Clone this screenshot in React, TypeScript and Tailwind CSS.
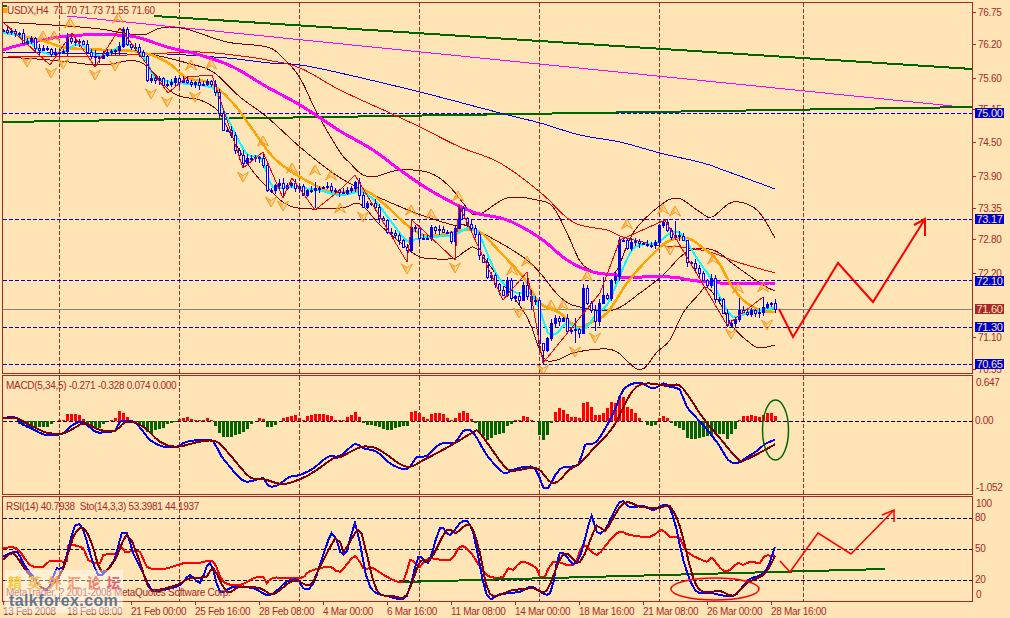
import React from 'react';

type Pt = [number, number];

// reference was measured in 3x crops, so most series are written as crop coords
const crop = (x0: number, y0: number, a: number[]): Pt[] => {
  const out: Pt[] = [];
  for (let i = 0; i < a.length; i += 2) out.push([x0 + a[i] / 3, y0 + a[i + 1] / 3]);
  return out;
};

// catmull-rom through the measured points, one sample per bar (bars are 4px apart)
const smooth = (p: Pt[]): Pt[] => {
  const out: Pt[] = [];
  for (let i = 0; i < p.length - 1; i++) {
    const a = p[Math.max(i - 1, 0)];
    const b = p[i];
    const c = p[i + 1];
    const d = p[Math.min(i + 2, p.length - 1)];
    const steps = Math.max(1, Math.round((c[0] - b[0]) / 4));
    for (let s = 0; s < steps; s++) {
      const t = s / steps;
      const f = (k: 0 | 1) =>
        0.5 * (2 * b[k] + (c[k] - a[k]) * t + (2 * a[k] - 5 * b[k] + 4 * c[k] - d[k]) * t * t + (3 * b[k] - a[k] - 3 * c[k] + d[k]) * t * t * t);
      out.push([f(0), f(1)]);
    }
  }
  out.push(p[p.length - 1]);
  return out;
};

const pts = (p: Pt[]) => p.map(([x, y]) => `${x.toFixed(1)},${y.toFixed(1)}`).join(' ');
const curve = (p: Pt[]) => pts(smooth(p));

const closes: Pt[] = [
  [3,30],[7,32],[11,31],[15,33],[19,33],[23,43],[27,41],[31,38],[35,48],[39,50],[43,48],[47,49],[51,54],[55,52],[59,52],[63,51],[67,38],[71,41],[75,42],[79,41],[83,44],[87,52],[91,56],[95,57],[99,58],[103,55],[107,52],[111,51],[115,50],[119,46],[123,29],[127,44],[131,47],[135,47],[139,52],[143,56],[147,80],[151,78],[155,80],[159,78],[163,85],[167,84],[171,82],[175,78],[179,82],[183,80],[187,82],[191,84],[195,82],[199,85],[203,84],[207,81],[211,84],[215,92],[219,113],[223,130],[227,130],[231,135],[235,150],[239,155],[243,163],[247,158],[251,158],[255,157],[259,158],[263,165],[267,190],[271,190],[275,185],[279,183],[283,188],[287,185],[291,183],[295,188],[299,186],[303,195],[307,190],[311,190],[315,188],[319,188],[323,187],[327,186],[331,190],[335,190],[339,192],
  [343,193],[347,190],[351,188],[355,182],[359,195],[363,207],[367,203],[371,203],[375,207],[379,218],[383,220],[387,232],[391,233],[395,235],[399,240],[403,247],[407,250],[411,227],[415,228],[419,238],[423,238],[427,238],[431,227],[435,230],[439,229],[443,232],[447,232],[451,241],[455,228],[459,208],[463,218],[467,224],[471,228],[475,234],[479,255],[483,262],[487,277],[491,275],[495,284],[499,290],[503,295],[507,280],[511,298],[515,296],[519,300],[523,285],[527,296],[531,301],[535,300],[539,343],[543,350],[547,338],[551,323],[555,318],[559,321],[563,318],[567,331],[571,330],[575,329],[579,333],[583,288],[587,303],[591,310],[595,321],[599,303],[603,295],[607,298],[611,280],[615,276],[619,240],[623,240],[627,248],[631,242],[635,241],[639,243],[643,244],[647,245],[651,245],[655,242],[659,225],[663,222],[667,230],[671,237],[675,235],[679,236],[683,240],[687,262],[691,263],[695,268],[699,273],[703,280],[707,285],[711,278],[715,299],[719,299],[723,313],[727,325],[731,323],[735,319],[739,310],[743,312],[747,314],[751,310],[755,313],[759,312],[763,307],[767,304],[771,303],[775,309],
];

// wicks that stick out in the picture: x -> [high, low]
const longWicks: Record<number, [number, number]> = {
  67: [33, 56], 95: [50, 67], 123: [27, 48], 243: [150, 168], 263: [152, 168], 283: [178, 198], 315: [182, 208],
  407: [244, 262], 455: [226, 260], 459: [205, 226], 527: [272, 300], 543: [344, 364], 575: [318, 343], 595: [305, 331],
  603: [277, 300], 663: [219, 228], 675: [221, 240], 687: [240, 267], 763: [297, 316], 739: [298, 322], 531: [290, 310],
};

const Candles = () => (
  <g>
    {closes.map(([x, c], i) => {
      const o = i === 0 ? c : closes[i - 1][1];
      const top = Math.min(o, c);
      const bottom = Math.max(o, c);
      const wick = longWicks[x] ?? [top - ((i * 7) % 4) - 1, bottom + ((i * 11) % 5) + 1];
      return (
        <g key={x}>
          <line x1={x + 0.5} x2={x + 0.5} y1={wick[0]} y2={wick[1]} stroke="#0000ff" />
          <rect x={x - 0.5} y={top + 0.5} width={2} height={Math.max(bottom - top, 1)} fill={c < o ? '#0000ff' : '#ffffff'} stroke="#0000ff" />
        </g>
      );
    })}
  </g>
);

const fractalsUp: Pt[] = [[70,23],[43,36],[54,36],[118,18],[191,65],[211,64],[263,141],[292,168],[315,170],[331,175],[340,208],[411,210],[431,214],[458,196],[512,270],[527,261],[551,305],[563,305],[587,276],[627,224],[663,209],[675,211],[713,259],[738,288],[763,287]];
const fractalsDown: Pt[] = [[27,62],[51,73],[63,64],[95,75],[115,66],[151,94],[167,102],[195,97],[243,177],[271,202],[283,206],[363,217],[407,269],[455,268],[519,313],[543,370],[575,352],[595,338],[670,250],[731,334],[767,325]];

const Fractal = ({ x, y, up }: { x: number; y: number; up: boolean }) => (
  <path
    transform={`translate(${x} ${y}) scale(1 ${up ? 1 : -1})`}
    d="M-5.5 5 L0 -5 L5.5 5 L0 1.5 Z M-1 -3 L-1 2 M-3 0 L-3 3"
    fill="#f59a1c"
    fillOpacity="0.12"
    stroke="#f59a1c"
    strokeWidth="1"
  />
);

const VGrid = ({ y1, y2 }: { y1: number; y2: number }) => (
  <g stroke="#a52a2a" strokeDasharray="4 2">
    {[59, 179, 299, 419, 539, 659, 803].map((x) => (
      <line key={x} x1={x + 0.5} x2={x + 0.5} y1={y1} y2={y2} />
    ))}
  </g>
);

const blue200: Pt[] = [[3,52],[60,53],[130,54],[167,54],[227,58],[270,63],[300,65],[340,73],[420,92],[500,113],[540,123],[580,135],[620,142],[660,153],[703,163],[723,170],[748,179],[775,189]];
const red100: Pt[] = [[3,57],[100,56],[167,53],[200,52],[233,55],[267,60],[300,68],[340,90],[390,113],[420,127],[460,147],[500,163],[540,192],[573,222],[607,230],[623,237],[657,245],[680,247],[710,252],[737,262],[775,273]];
const magentaMa: Pt[] = [[3,50],[20,45],[67,36],[117,35],[140,38],[167,47],[200,55],[233,67],[267,87],[300,105],[340,131],[373,150],[400,170],[433,192],[473,212],[507,220],[540,238],[567,260],[593,272],[617,275],[620,277],[670,277],[690,280],[720,283],[775,283]];
const orangeMa: Pt[] = [[3,32],[27,37],[50,43],[67,48],[107,50],[140,52],[167,62],[187,78],[210,83],[233,103],[253,130],[273,157],[300,177],[333,192],[363,190],[383,203],[407,225],[423,235],[440,235],[463,230],[480,232],[500,252],[523,277],[540,303],[560,313],[577,327],[590,323],[607,313],[627,283],[647,260],[667,242],[687,238],[703,248],[717,260],[730,283],[743,300],[760,310],[775,312]];
const cyanMa: Pt[] = [[3,33],[20,36],[33,45],[44,53],[60,53],[67,50],[75,45],[85,47],[97,55],[107,55],[118,47],[127,44],[137,50],[148,63],[155,78],[180,83],[213,88],[220,103],[230,123],[240,143],[248,155],[260,157],[267,173],[273,187],[293,187],[317,190],[340,195],[357,192],[365,193],[377,203],[390,220],[403,237],[410,242],[420,238],[453,235],[468,228],[478,232],[487,253],[500,280],[517,293],[530,293],[540,310],[548,333],[557,333],[567,323],[583,330],[597,313],[607,305],[617,283],[630,253],[640,245],[657,243],[670,233],[680,233],[690,247],[700,263],[710,277],[720,297],[733,317],[750,312],[775,308]];
const bandUpper: Pt[] = [[3,22],[67,26],[100,29],[140,35],[157,29],[170,27],[190,30],[227,42],[267,47],[283,58],[300,78],[317,113],[340,152],[350,163],[360,173],[373,177],[400,170],[430,173],[450,187],[463,203],[477,215],[507,198],[537,200],[553,207],[567,233],[583,265],[607,274],[617,270],[633,233],[657,208],[677,198],[700,212],[712,217],[733,202],[757,210],[775,238]];
const bandMiddle: Pt[] = [[143,52],[187,63],[213,72],[240,97],[267,117],[300,147],[333,173],[363,190],[413,212],[453,225],[470,227],[527,260],[560,297],[580,307],[613,310],[640,293],[663,275],[687,252],[713,250],[737,267],[763,285],[775,291]];
const bandLower: Pt[] = [[3,57],[50,60],[100,65],[140,62],[173,93],[200,100],[217,110],[227,127],[247,163],[267,187],[293,207],[340,208],[360,204],[380,225],[407,248],[420,257],[437,259],[455,258],[467,250],[477,249],[500,280],[527,317],[543,357],[557,360],[573,353],[600,349],[617,352],[640,370],[657,352],[670,340],[683,313],[700,293],[707,287],[720,303],[733,327],[750,343],[760,348],[775,345]];
const zigzag: Pt[] = [[3,22],[50,65],[72,33],[95,67],[120,28],[168,93],[187,77],[212,75],[243,168],[263,152],[283,198],[292,178],[315,210],[340,190],[355,175],[407,262],[412,220],[455,260],[459,205],[503,300],[527,272],[543,363],[600,293],[620,240],[665,220],[727,325],[763,297]];

const hist: number[] = [
  0,0,0,0,-3,-5,-7,-8,-7,-6,-6,-6,-3,0,1,1,7,7,7,6,2,-3,-7,-8,-7,-3,0,1,3,10,8,4,0,-2,-5,-7,-11,-13,-9,-8,-7,-3,-2,-1,2,3,4,2,1,1,1,3,1,-5,-12,-16,-16,-16,-14,-13,-11,-8,-3,0,3,2,-6,-6,-4,0,3,4,5,6,3,1,5,6,7,7,7,6,5,1,1,
  1,4,6,9,4,-2,-4,-4,-5,-6,-8,-9,-9,-7,-6,-5,-5,9,10,8,4,2,7,8,8,7,3,1,3,8,10,8,2,-2,-11,-15,-19,-17,-14,-13,-12,-5,-3,1,1,5,4,1,0,-14,-19,-14,-2,9,13,11,7,4,4,3,18,19,14,6,6,8,13,19,18,25,24,14,12,8,3,0,-4,-5,-4,3,5,3,
  -2,-5,-7,-9,-17,-18,-18,-17,-16,-15,-14,-12,-13,-13,-18,-13,-8,1,5,5,6,5,4,6,8,8,5,
];

const macdBlue = [
  ...crop(0, 370, [10,143,50,143,60,158,100,178,130,193,160,195,190,190,210,170,240,155,260,165,290,187,320,185,345,182,360,155,400,155,430,185,450,210,490,230,530,230,560,215,610,210,640,215,665,260,690,290,710,315,740,335,790,325,805,347,830,347,870,320,900,315,940,295,985,260,1020,258]),
  ...crop(340, 370, [45,222,70,235,110,245,150,280,200,298,230,262,260,258,300,222,345,218,370,183,400,188,440,255,490,308,510,303,545,292,585,295,610,353,625,353,660,297,715,283,735,225,770,215,820,130,850,60,895,38,940,55,970,40]),
  ...crop(670, 370, [0,50,30,60,50,110,90,155,120,190,150,230,175,270,200,280,230,262,260,243,285,222,315,209]),
];
const macdDark = [
  ...crop(0, 370, [10,143,50,145,100,170,140,188,190,190,230,170,255,160,300,180,345,182,380,155,430,170,480,215,530,230,600,215,650,215,690,255,750,322,790,327,850,342,910,323,950,300,1000,265,1020,262]),
  ...crop(340, 370, [60,232,100,232,130,247,200,290,260,265,340,222,400,187,420,190,490,285,520,302,590,295,640,340,690,298,720,280,770,225,820,170,890,50,980,47]),
  ...crop(670, 370, [0,45,30,47,60,85,100,145,150,205,205,268,230,268,315,223]),
];
const stoBlue = [
  ...crop(0, 370, [10,560,50,545,70,580,100,620,140,660,170,595,190,590,225,467,250,480,270,550,295,615,320,600,345,565,365,490,380,488,400,550,430,610,455,660,490,660,540,645,570,615,600,638,630,578,660,665,700,650,760,655,810,675,860,635,895,630,910,655,940,640,995,490,1020,545]),
  ...crop(340, 370, [20,545,45,458,60,520,90,650,150,680,200,678,235,562,265,578,300,475,330,495,370,452,400,490,440,675,480,672,540,665,575,650,630,670,660,548,710,580,755,437,770,485,795,480,840,395,870,412,910,408,940,420,970,405]),
  ...crop(670, 370, [0,415,20,480,40,570,75,660,120,668,170,678,200,672,235,630,285,605,315,530]),
];
const stoDark = [
  ...crop(0, 370, [10,568,40,550,70,590,110,640,145,655,190,595,220,500,250,473,275,520,305,605,345,570,380,495,410,550,445,650,470,660,530,645,570,625,620,620,640,595,680,665,720,650,780,655,820,672,880,632,930,645,960,590,1005,507,1020,515]),
  ...crop(340, 370, [10,545,55,480,75,530,110,660,160,678,200,675,240,575,270,570,320,480,345,490,390,465,420,550,450,672,520,660,580,655,620,662,670,552,720,575,770,467,795,483,850,400,900,410,950,415,980,407]),
  ...crop(670, 370, [0,408,30,470,70,625,100,665,150,663,190,677,230,640,285,610,315,557]),
];
const rsiRed = [
  ...crop(0, 370, [10,535,50,535,90,585,130,590,150,572,200,572,205,528,250,535,265,570,300,580,310,555,355,550,360,525,375,545,420,545,440,590,490,597,550,580,600,578,640,575,670,635,720,645,760,625,790,620,800,640,820,623,900,625,920,610,940,600,990,590,1020,605]),
  ...crop(340, 370, [45,558,70,595,100,595,140,620,190,635,210,570,240,590,265,565,330,570,360,530,390,545,440,615,490,620,505,595,520,600,545,575,590,595,600,622,615,620,640,575,700,585,730,525,770,555,810,510,840,485,870,495,930,500,965,480]),
  ...crop(670, 370, [0,500,30,505,50,545,110,575,125,563,165,605,205,578,220,585,240,575,270,578,285,557,315,560]),
];

const ink = '#a52a2a';

// legend and axis captions are chart text, so they sit in the svg with the series
const ChartText = ({ x, y, children }: { x: number; y: number; children: React.ReactNode }) => (
  <text x={x} y={y} fill={ink} xmlSpace="preserve">
    {children}
  </text>
);

const PriceBox = ({ y, label, fill = '#0000cd' }: { y: number; label: string; fill?: string }) => (
  <g>
    <rect x={975} y={y - 5} width={29} height={10} fill={fill} />
    <text x={989.5} y={y + 4} textAnchor="middle" fill="#ffe4b5" className="text-[11px]">{label}</text>
  </g>
);

const priceTicks: [number, string][] = [[12, '76.75'], [44, '76.20'], [78, '75.60'], [109, '75.15'], [142, '74.50'], [176, '73.90'], [208, '73.35'], [239, '72.80'], [273, '72.20'], [337, '71.10'], [369, '70.55']];

const timeLabels = ['13 Feb 2008', '18 Feb 08:00', '21 Feb 00:00', '25 Feb 16:00', '28 Feb 08:00', '4 Mar 00:00', '6 Mar 16:00', '11 Mar 08:00', '14 Mar 00:00', '18 Mar 16:00', '21 Mar 08:00', '26 Mar 00:00', '28 Mar 16:00'];

const MainChart = () => (
  <svg className="block h-full w-full" viewBox="3 3 969 370" shapeRendering="crispEdges">
    <VGrid y1={3} y2={373} />
    <g stroke="#0000cd" strokeDasharray="4 2">
      {[113, 219, 280, 327, 364].map((y) => (
        <line key={y} x1={3} x2={972} y1={y + 0.5} y2={y + 0.5} />
      ))}
    </g>
    <line x1={3} x2={972} y1={309.5} y2={309.5} stroke="#808080" />
    <line x1={154} y1={16} x2={972} y2={69} stroke="#006400" strokeWidth="2" />
    <line x1={67} y1={16} x2={972} y2={108} stroke="#ff00ff" />
    <line x1={3} y1={122} x2={972} y2={107} stroke="#006400" strokeWidth="2" />
    <g fill="none">
      <polyline points={curve(blue200)} stroke="#0000ff" />
      <polyline points={curve(red100)} stroke="#ff0000" />
      <polyline points={curve(bandUpper)} stroke="#800000" />
      <polyline points={curve(bandMiddle)} stroke="#800000" />
      <polyline points={curve(bandLower)} stroke="#800000" />
      <polyline points={curve(magentaMa)} stroke="#ff00ff" strokeWidth="3" />
      <polyline points={curve(orangeMa)} stroke="#ffa500" strokeWidth="2.5" />
      <polyline points={curve(cyanMa)} stroke="#00ffff" strokeWidth="2" />
    </g>
    <Candles />
    <polyline points={pts(zigzag)} fill="none" stroke="#ff0000" />
    <g shapeRendering="auto">
      {fractalsUp.map(([x, y]) => <Fractal key={`u${x}`} x={x} y={y} up />)}
      {fractalsDown.map(([x, y]) => <Fractal key={`d${x}`} x={x} y={y} up={false} />)}
      <polyline points="779,309 793,337 838,263 873,302 925,219" fill="none" stroke="#ff0000" strokeWidth="2" />
      <path d="M914 225 L925 219 L925 236" fill="none" stroke="#ff0000" strokeWidth="2" />
    </g>
    <rect x={3} y={5} width={4} height={2} fill="#006400" />
    <rect x={3} y={8} width={4} height={5} fill="#ffa500" />
    <ChartText x={7} y={14}>USDX,H4  71.70 71.73 71.55 71.60</ChartText>
  </svg>
);

const MacdChart = () => (
  <svg className="block h-full w-full" viewBox="3 376 969 118" shapeRendering="crispEdges">
    <VGrid y1={376} y2={494} />
    <line x1={3} x2={972} y1={421.5} y2={421.5} stroke="#000000" strokeDasharray="4 2" />
    {hist.map((v, i) =>
      v === 0 ? null : (
        <rect
          key={i}
          x={2 + 4 * i}
          y={v > 0 ? 421 - v : 421}
          width={3}
          height={Math.abs(v)}
          fill={v > 0 ? '#ff0000' : '#006400'}
        />
      ),
    )}
    <g fill="none" strokeWidth="2">
      <polyline points={curve(macdBlue)} stroke="#0000ff" />
      <polyline points={curve(macdDark)} stroke="#800000" />
    </g>
    <ellipse cx={775.5} cy={430} rx={13} ry={30} fill="none" stroke="#006400" strokeWidth="1.5" shapeRendering="auto" />
    <ChartText x={6} y={389}>MACD(5,34,5) -0.271 -0.328 0.074 0.000</ChartText>
  </svg>
);

const RsiChart = () => (
  <svg className="block h-full w-full" viewBox="3 497 969 104" shapeRendering="crispEdges">
    <VGrid y1={497} y2={601} />
    <g stroke="#000000" strokeDasharray="4 2">
      {[518, 549, 580].map((y) => (
        <line key={y} x1={3} x2={972} y1={y + 0.5} y2={y + 0.5} />
      ))}
    </g>
    <g fill="none" strokeWidth="2">
      <polyline points={curve(rsiRed)} stroke="#ff0000" />
      <line x1={403} y1={582} x2={885} y2={569} stroke="#006400" />
      <polyline points={curve(stoBlue)} stroke="#0000ff" />
      <polyline points={curve(stoDark)} stroke="#800000" />
    </g>
    <g fill="none" stroke="#ff0000" shapeRendering="auto">
      <polyline points="780,561 790,572 818,533 851,554 894,510" strokeWidth="1.5" />
      <path d="M882 515 L894 510 L894 522" strokeWidth="1.5" />
      <ellipse cx={715} cy={589} rx={44} ry={11} strokeWidth="1.5" />
    </g>
    <ChartText x={6} y={510}>RSI(14) 40.7938  Sto(14,3,3) 53.3981 44.1937</ChartText>
    <ChartText x={6} y={596}>MetaTrader, ? 2001-2008 MetaQuotes Software Corp.</ChartText>
  </svg>
);

export default function App() {
  return (
    <div className="relative flex h-[618px] w-[1010px] flex-col gap-px overflow-hidden bg-[#ffe4b5] pl-[2px] pt-[2px] font-['Liberation_Sans',sans-serif] text-[10px] tracking-[-0.3px]">
      {/* price pane */}
      <div className="flex">
        <div className="h-[372px] w-[971px] border border-[#a52a2a]">
          <MainChart />
        </div>
        <svg className="block h-[372px] w-[37px]" viewBox="973 2 37 372">
          {priceTicks.map(([y, label]) => (
            <g key={label}>
              <rect x={973} y={y} width={3} height={1} fill={ink} />
              <ChartText x={978} y={y + 3.5}>{label}</ChartText>
            </g>
          ))}
          <PriceBox y={113} label="75.00" />
          <PriceBox y={219} label="73.17" />
          <PriceBox y={281} label="72.10" />
          <PriceBox y={309} label="71.60" fill={ink} />
          <PriceBox y={327} label="71.30" />
          <PriceBox y={364} label="70.65" />
        </svg>
      </div>

      {/* macd pane */}
      <div className="flex">
        <div className="h-[120px] w-[971px] border border-[#a52a2a]">
          <MacdChart />
        </div>
        <svg className="block h-[120px] w-[37px]" viewBox="973 375 37 120">
          <ChartText x={976} y={386}>0.647</ChartText>
          <ChartText x={975} y={424}>0.00</ChartText>
          <ChartText x={976} y={491}>-1.052</ChartText>
        </svg>
      </div>

      {/* rsi + stochastic pane */}
      <div className="flex">
        <div className="h-[106px] w-[971px] border border-[#a52a2a]">
          <RsiChart />
        </div>
        <svg className="block h-[106px] w-[37px]" viewBox="973 496 37 106">
          <ChartText x={976} y={507}>100</ChartText>
          <ChartText x={975} y={521}>80</ChartText>
          <ChartText x={975} y={552}>50</ChartText>
          <ChartText x={975} y={583}>20</ChartText>
          <ChartText x={976} y={598}>0</ChartText>
        </svg>
      </div>

      {/* time axis */}
      <div className="-mt-px flex pl-px">
        {timeLabels.map((t) => (
          <div key={t} className="w-[64px] shrink-0">
            <div className="h-[3px] w-px bg-[#a52a2a]" />
            <div className="mt-px whitespace-nowrap leading-[12px] text-[#a52a2a]">{t}</div>
          </div>
        ))}
      </div>

      {/* forum watermark */}
      <div className="absolute left-[5px] top-[570px] flex h-[43px] w-[118px] flex-col bg-white/45">
        <div className="flex gap-[6px] pl-[3px] pt-[3px] font-['Noto_Sans_CJK_SC',sans-serif] text-[14px] font-bold leading-[18px]">
          <span className="text-[#f8c83a]">精</span>
          <span className="text-[#f5c060]">英</span>
          <span className="text-[#f7a860]">外</span>
          <span className="text-[#f59a70]">汇</span>
          <span className="text-[#f58068]">论</span>
          <span className="text-[#e86070]">坛</span>
        </div>
        <div className="pl-[4px] pt-[1px] text-[16px] font-bold leading-[18px] tracking-[0.4px] text-[#5f7690]">talkforex.com</div>
      </div>
    </div>
  );
}
